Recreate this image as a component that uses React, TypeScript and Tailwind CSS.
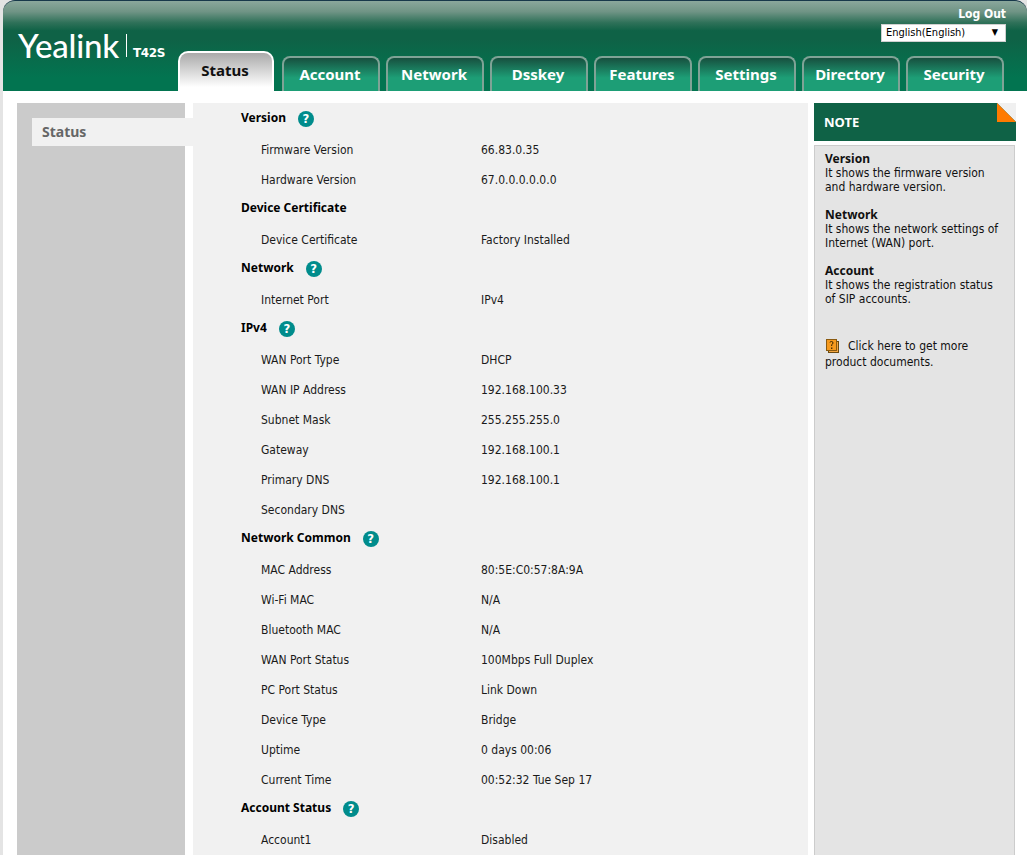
import React from 'react';

const font = "font-['DejaVu_Sans_Condensed',sans-serif]";

const tabs = ['Account', 'Network', 'Dsskey', 'Features', 'Settings', 'Directory', 'Security'];

type Row = { head?: boolean; help?: boolean; label: string; value?: string };

const rows: Row[] = [
  { head: true, help: true, label: 'Version' },
  { label: 'Firmware Version', value: '66.83.0.35' },
  { label: 'Hardware Version', value: '67.0.0.0.0.0.0' },
  { head: true, label: 'Device Certificate' },
  { label: 'Device Certificate', value: 'Factory Installed' },
  { head: true, help: true, label: 'Network' },
  { label: 'Internet Port', value: 'IPv4' },
  { head: true, help: true, label: 'IPv4' },
  { label: 'WAN Port Type', value: 'DHCP' },
  { label: 'WAN IP Address', value: '192.168.100.33' },
  { label: 'Subnet Mask', value: '255.255.255.0' },
  { label: 'Gateway', value: '192.168.100.1' },
  { label: 'Primary DNS', value: '192.168.100.1' },
  { label: 'Secondary DNS' },
  { head: true, help: true, label: 'Network Common' },
  { label: 'MAC Address', value: '80:5E:C0:57:8A:9A' },
  { label: 'Wi-Fi MAC', value: 'N/A' },
  { label: 'Bluetooth MAC', value: 'N/A' },
  { label: 'WAN Port Status', value: '100Mbps Full Duplex' },
  { label: 'PC Port Status', value: 'Link Down' },
  { label: 'Device Type', value: 'Bridge' },
  { label: 'Uptime', value: '0 days 00:06' },
  { label: 'Current Time', value: '00:52:32 Tue Sep 17' },
  { head: true, help: true, label: 'Account Status' },
  { label: 'Account1', value: 'Disabled' },
];

const notes = [
  { title: 'Version', lines: ['It shows the firmware version', 'and hardware version.'] },
  { title: 'Network', lines: ['It shows the network settings of', 'Internet (WAN) port.'] },
  { title: 'Account', lines: ['It shows the registration status', 'of SIP accounts.'] },
];

const HelpIcon = () => (
  <span className="ml-[12px] mt-[2px] flex h-[16px] w-[16px] items-center justify-center rounded-full bg-[#008c8c] text-[13px] leading-none font-bold text-white">
    ?
  </span>
);

const App = () => {
  return (
    <div className={`h-[855px] overflow-hidden bg-[#e4e4e4] pl-[3px] ${font} text-[12px] text-[#1a1a1a]`}>
      {/* header */}
      <div className="flex h-[91px] rounded-t-[12px] border-t-[1px] border-[#17384a] bg-[linear-gradient(180deg,#8aa79c_0%,#6f9485_12%,#2f7159_24%,#0f6246_33%,#0f6246_42%,#027450_85%,#027450_100%)]">
        <div className="w-[175px] shrink-0 pl-[15px] pt-[25px]">
          <div className="flex items-end text-white">
            <span className="font-['Lato',sans-serif] text-[33px] leading-[38px] font-medium tracking-[-0.2px]">Yealink</span>
            <span className="mb-[7px] ml-[7px] h-[23px] w-[1px] bg-white"></span>
            <span className="mb-[3px] ml-[6px] font-['DejaVu_Sans',sans-serif] text-[12px] leading-[16px] font-bold tracking-[-0.4px]">T42S</span>
          </div>
        </div>
        <div className="flex flex-1 flex-col">
          <div className="flex justify-end pr-[21px] pt-[5px] text-[12px] leading-[16px] font-bold text-white">Log Out</div>
          <div className="mt-[2px] flex justify-end pr-[21px]">
            <div className="flex h-[18px] w-[125px] items-center justify-between border border-[#d0d0d0] bg-white pl-[4px] pr-[7px] text-[11px] text-black">
              <span>English(English)</span>
              <span className="text-[9px]">▼</span>
            </div>
          </div>
          <div className="mt-auto flex items-end">
            <div className="flex h-[40px] w-[96px] items-center justify-center rounded-t-[10px] border-[2px] border-b-0 border-white bg-[linear-gradient(180deg,#aaaaaa_0%,#ffffff_90%)] pb-[4px] pr-[2px] font-['Noto_Sans',sans-serif] text-[15px] font-bold text-[#111]">
              Status
            </div>
            <div className="ml-[8px] flex gap-[6px]">
              {tabs.map((tab) => (
                <div
                  key={tab}
                  className="flex h-[35px] w-[98px] items-center justify-center rounded-t-[8px] border-[2px] border-b-0 border-[#7fa396] bg-[linear-gradient(180deg,#17503f_0%,#1d9e76_60%,#1d9e76_100%)] pr-[2px] font-['Noto_Sans',sans-serif] text-[15px] font-bold text-white"
                >
                  {tab}
                </div>
              ))}
            </div>
          </div>
        </div>
      </div>

      {/* body */}
      <div className="flex h-[764px] bg-white pl-[14px] pt-[12px]">
        <div className="w-[168px] shrink-0 bg-[#cbcbcb] pl-[15px] pt-[15px]">
          <div className="flex h-[28px] w-[161px] items-center bg-[#f1f1f1] pb-[1px] pl-[10px] font-['Noto_Sans',sans-serif] text-[14px] font-bold text-[#666666]">
            Status
          </div>
        </div>

        <div className="ml-[8px] w-[615px] shrink-0 bg-[#f1f1f1] pl-[48px]">
          {rows.map((row, index) =>
            row.head ? (
              <div key={index} className="flex h-[30px] items-center pb-[1px] font-bold text-black">
                <span className="font-['Noto_Sans',sans-serif]">{row.label}</span>
                {row.help && <HelpIcon />}
              </div>
            ) : (
              <div key={index} className="flex h-[30px] items-center pl-[20px] pt-[3px]">
                <span className="w-[220px]">{row.label}</span>
                <span>{row.value}</span>
              </div>
            ),
          )}
        </div>

        <div className="ml-[6px] w-[202px] shrink-0">
          <div className="relative flex h-[38px] items-center bg-[#0f6246] pl-[10px] pt-[1px] font-['Noto_Sans',sans-serif] text-[13px] font-bold text-white">
            NOTE
            <svg className="absolute right-0 top-0" width="19" height="19" viewBox="0 0 19 19">
              <path d="M0 0H19V19Z" fill="#f0f0f0" />
              <path d="M0 0L19 19H0Z" fill="#ff7a00" />
            </svg>
          </div>
          <div className="mt-[4px] h-[720px] w-[201px] border-[1px] border-[#cccccc] bg-[#e4e4e4] pl-[10px] pt-[6px] text-[12px] leading-[14px] text-[#111]">
            {notes.map((note) => (
              <div key={note.title} className="mb-[14px]">
                <div className="font-['Noto_Sans',sans-serif] font-bold">{note.title}</div>
                {note.lines.map((line) => (
                  <div key={line}>{line}</div>
                ))}
              </div>
            ))}
            <div className="mt-[32px] leading-[16px]">
              <div className="flex items-center">
                <svg width="15" height="16" viewBox="0 0 15 16" className="mr-[8px]">
                  <rect x="3.5" y="3.5" width="10" height="11" fill="#f4a640" stroke="#6b4a10" />
                  <rect x="1.5" y="1.5" width="10" height="11" fill="#f79a1e" stroke="#8a5a10" />
                  <path d="M5 4.5Q5 3.5 6.5 3.5Q8 3.5 8 5Q8 6 6.7 6.6V8" fill="none" stroke="#3a2500" />
                  <rect x="6" y="9.5" width="1.4" height="1.4" fill="#3a2500" />
                </svg>
                <span>Click here to get more</span>
              </div>
              <div>product documents.</div>
            </div>
          </div>
        </div>
      </div>
    </div>
  );
};

export default App;
